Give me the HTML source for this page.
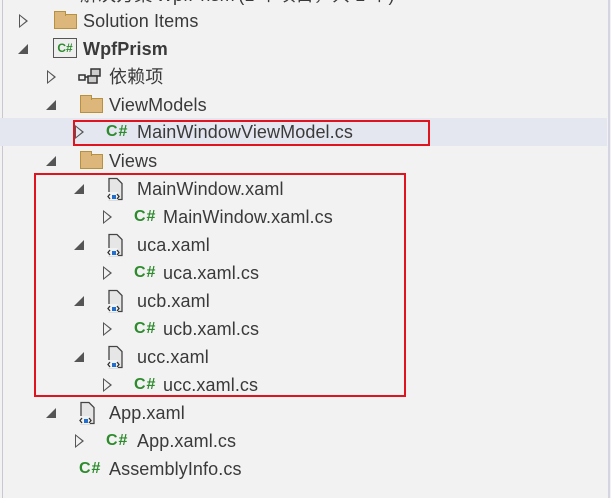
<!DOCTYPE html>
<html><head><meta charset="utf-8"><style>
body{margin:0;width:611px;height:498px;background:#f2f2f2;overflow:hidden;position:relative;font-family:"Liberation Sans","Noto Sans CJK SC",sans-serif;font-size:18px;color:#3a3a3a}
.r{position:absolute;left:0;width:607px;height:28px}
.t{position:absolute;top:3px;white-space:nowrap;line-height:22px;letter-spacing:0.1px}
.ex{position:absolute;top:7px;width:0;height:0;border-top:7px solid transparent;border-bottom:7px solid transparent;border-left:9px solid #555}
.ex:after{content:"";position:absolute;left:-8px;top:-5px;border-top:5px solid transparent;border-bottom:5px solid transparent;border-left:6px solid #f2f2f2}
.sel .ex:after{border-left-color:#e4e6f0}
.co{position:absolute;top:9px;width:0;height:0;border-left:10px solid transparent;border-bottom:10px solid #555}
.cs{position:absolute;top:3px;font-weight:bold;color:#2d8a2d;font-size:16px;line-height:22px;letter-spacing:1px}
.fo{position:absolute;top:7px;width:23px;height:15px;background:#dcb67a;border:1px solid #b8913f;box-sizing:border-box}
.fo:before{content:"";position:absolute;left:-1px;top:-4px;width:10px;height:4px;background:#dcb67a;border:1px solid #b8913f;border-bottom:none}
.xa{position:absolute;top:2px;width:20px;height:24px}
</style></head><body>
<div style="position:absolute;left:2px;top:0;width:1px;height:498px;background:#c8c8d0"></div>
<div style="position:absolute;left:608px;top:0;width:2px;height:498px;background:#d4d4e2"></div>
<div class="t" style="left:80px;top:-16px">解决方案'WpfPrism'(1 个项目，共 1 个)</div>

<div class="r" style="top:7px"><div class="ex" style="left:19px"></div><div class="fo" style="left:54px"></div><div class="t" style="left:83px">Solution Items</div></div>
<div class="r" style="top:35px"><div class="co" style="left:18px"></div>
<div style="position:absolute;left:53px;top:3px;width:24px;height:20px;border:1px solid #555;background:#eee;box-sizing:border-box;color:#2d8a2d;font-size:12px;font-weight:bold;line-height:18px;text-align:center">C#</div>
<div class="t" style="left:83px;font-weight:bold">WpfPrism</div></div>
<div class="r" style="top:63px"><div class="ex" style="left:47px"></div>
<svg style="position:absolute;left:78px;top:5px" width="24" height="17"><rect x="1" y="7" width="6" height="5" fill="none" stroke="#333" stroke-width="1.5"/><rect x="13" y="1" width="9" height="7" fill="#ccc" stroke="#333" stroke-width="1.5"/><rect x="10" y="8" width="9" height="7" fill="#ccc" stroke="#333" stroke-width="1.5"/><line x1="7" y1="9" x2="10" y2="9" stroke="#333" stroke-width="1.5"/></svg>
<div class="t" style="left:109px">依赖项</div></div>
<div class="r" style="top:91px"><div class="co" style="left:46px"></div><div class="fo" style="left:80px"></div><div class="t" style="left:109px">ViewModels</div></div>
<div class="r sel" style="top:118px;height:28px;background:#e4e6f0"><div class="ex" style="left:75px"></div><div class="cs" style="left:106px">C#</div><div class="t" style="left:137px">MainWindowViewModel.cs</div></div>
<div class="r" style="top:147px"><div class="co" style="left:46px"></div><div class="fo" style="left:80px"></div><div class="t" style="left:109px">Views</div></div>

<div class="r" style="top:175px"><div class="co" style="left:74px"></div><svg class="xa" style="left:105px" viewBox="0 0 20 24"><path d="M4 1.5h8l5 5v16H4z" fill="#e6e6e6" stroke="#444" stroke-width="1.3"/><rect x="2" y="15" width="11" height="8" fill="#f2f2f2"/><path d="M5 17l-2 2.5 2 2.5M12 17l2 2.5-2 2.5" fill="none" stroke="#333" stroke-width="1.3"/><rect x="7" y="18" width="4" height="4" fill="#1e6fd0"/></svg><div class="t" style="left:137px">MainWindow.xaml</div></div>
<div class="r" style="top:203px"><div class="ex" style="left:103px"></div><div class="cs" style="left:134px">C#</div><div class="t" style="left:163px">MainWindow.xaml.cs</div></div>
<div class="r" style="top:231px"><div class="co" style="left:74px"></div><svg class="xa" style="left:105px" viewBox="0 0 20 24"><path d="M4 1.5h8l5 5v16H4z" fill="#e6e6e6" stroke="#444" stroke-width="1.3"/><rect x="2" y="15" width="11" height="8" fill="#f2f2f2"/><path d="M5 17l-2 2.5 2 2.5M12 17l2 2.5-2 2.5" fill="none" stroke="#333" stroke-width="1.3"/><rect x="7" y="18" width="4" height="4" fill="#1e6fd0"/></svg><div class="t" style="left:137px">uca.xaml</div></div>
<div class="r" style="top:259px"><div class="ex" style="left:103px"></div><div class="cs" style="left:134px">C#</div><div class="t" style="left:163px">uca.xaml.cs</div></div>
<div class="r" style="top:287px"><div class="co" style="left:74px"></div><svg class="xa" style="left:105px" viewBox="0 0 20 24"><path d="M4 1.5h8l5 5v16H4z" fill="#e6e6e6" stroke="#444" stroke-width="1.3"/><rect x="2" y="15" width="11" height="8" fill="#f2f2f2"/><path d="M5 17l-2 2.5 2 2.5M12 17l2 2.5-2 2.5" fill="none" stroke="#333" stroke-width="1.3"/><rect x="7" y="18" width="4" height="4" fill="#1e6fd0"/></svg><div class="t" style="left:137px">ucb.xaml</div></div>
<div class="r" style="top:315px"><div class="ex" style="left:103px"></div><div class="cs" style="left:134px">C#</div><div class="t" style="left:163px">ucb.xaml.cs</div></div>
<div class="r" style="top:343px"><div class="co" style="left:74px"></div><svg class="xa" style="left:105px" viewBox="0 0 20 24"><path d="M4 1.5h8l5 5v16H4z" fill="#e6e6e6" stroke="#444" stroke-width="1.3"/><rect x="2" y="15" width="11" height="8" fill="#f2f2f2"/><path d="M5 17l-2 2.5 2 2.5M12 17l2 2.5-2 2.5" fill="none" stroke="#333" stroke-width="1.3"/><rect x="7" y="18" width="4" height="4" fill="#1e6fd0"/></svg><div class="t" style="left:137px">ucc.xaml</div></div>
<div class="r" style="top:371px"><div class="ex" style="left:103px"></div><div class="cs" style="left:134px">C#</div><div class="t" style="left:163px">ucc.xaml.cs</div></div>

<div class="r" style="top:399px"><div class="co" style="left:46px"></div><svg class="xa" style="left:77px" viewBox="0 0 20 24"><path d="M4 1.5h8l5 5v16H4z" fill="#e6e6e6" stroke="#444" stroke-width="1.3"/><rect x="2" y="15" width="11" height="8" fill="#f2f2f2"/><path d="M5 17l-2 2.5 2 2.5M12 17l2 2.5-2 2.5" fill="none" stroke="#333" stroke-width="1.3"/><rect x="7" y="18" width="4" height="4" fill="#1e6fd0"/></svg><div class="t" style="left:109px">App.xaml</div></div>
<div class="r" style="top:427px"><div class="ex" style="left:75px"></div><div class="cs" style="left:106px">C#</div><div class="t" style="left:137px">App.xaml.cs</div></div>
<div class="r" style="top:455px"><div class="cs" style="left:79px">C#</div><div class="t" style="left:109px">AssemblyInfo.cs</div></div>

<div style="position:absolute;left:73px;top:120px;width:357px;height:26px;border:2px solid #e0141e;box-sizing:border-box"></div>
<div style="position:absolute;left:34px;top:173px;width:372px;height:224px;border:2px solid #e0141e;box-sizing:border-box"></div>
</body></html>
